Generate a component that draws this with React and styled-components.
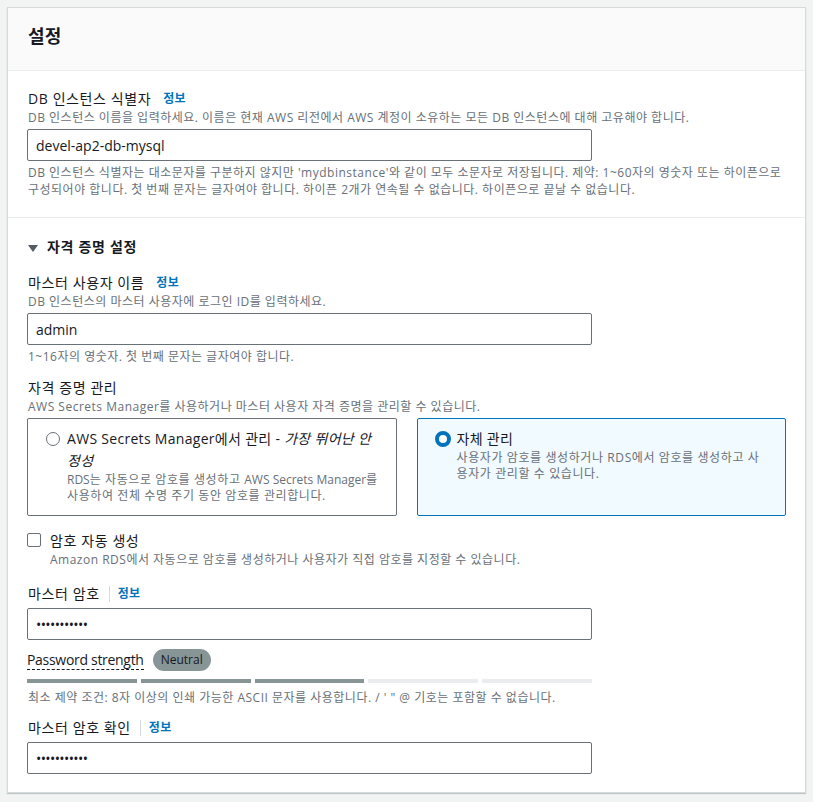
import React from "react";
import styled, { createGlobalStyle } from "styled-components";

const GlobalStyle = createGlobalStyle`
  body {
    margin: 0;
    background-color: #f2f3f3;
    font-family: "Open Sans", "Noto Sans CJK KR", sans-serif;
    color: #16191f;
  }
`;

const Page = styled.div`
  padding: 7px 7px 8px;
`;

const Card = styled.div`
  background-color: white;
  border: 1px solid #d5dbdb;
  box-shadow: 0 1px 1px rgba(0, 28, 36, 0.2);
`;

const Header = styled.div`
  height: 63px;
  box-sizing: border-box;
  padding: 15px 19px 0 20px;
  background-color: #fafafa;
  border-bottom: 1px solid #eaeded;
`;

const Title = styled.h2`
  margin: 0;
  font-size: 18px;
  line-height: 26px;
  font-weight: 700;
  letter-spacing: 0.3px;
`;

const Section = styled.div`
  padding: ${(props) => props.pad};
  border-top: ${(props) => (props.divided ? "1px solid #eaeded" : "none")};
`;

const ExpandHeader = styled.div`
  display: flex;
  align-items: center;
  gap: 9px;
  font-size: 14px;
  line-height: 20px;
  font-weight: 700;
  letter-spacing: 0.7px;
  padding-left: 1px;
`;

const Caret = styled.span`
  width: 0;
  height: 0;
  margin-top: 2px;
  border-left: 5px solid transparent;
  border-right: 5px solid transparent;
  border-top: 7px solid #545b64;
`;

const LabelRow = styled.div`
  display: flex;
  align-items: center;
  margin-top: ${(props) => props.top || 0}px;
  font-size: 14px;
  line-height: 20px;
`;

const Label = styled.span`
  padding-left: 1px;
  letter-spacing: 0.6px;
`;

const InfoLink = styled.a`
  color: #0073bb;
  font-size: 12px;
  font-weight: 700;
  letter-spacing: 0.3px;
  text-decoration: none;
  margin-left: ${(props) => (props.split ? 0 : 12)}px;
`;

const Split = styled.span`
  width: 1px;
  height: 16px;
  background-color: #d5dbdb;
  margin: 0 8px 0 9px;
`;

const Description = styled.div`
  font-size: 12px;
  line-height: 17px;
  letter-spacing: 0.5px;
  color: #687078;
  padding-left: ${(props) => props.indent || 1}px;
`;

const Input = styled.input`
  display: block;
  box-sizing: border-box;
  width: 565px;
  height: 32px;
  margin-top: ${(props) => props.top || 3}px;
  padding: 0 8px;
  border: 1px solid #687078;
  border-radius: 2px;
  font-family: "Open Sans", "Noto Sans CJK KR", sans-serif;
  font-size: 14px;
  color: #16191f;
  background: white;
  outline: none;
  letter-spacing: ${(props) => (props.type === "password" ? "-0.6px" : "normal")};
`;

const Constraint = styled.div`
  margin-top: 3px;
  font-size: 12px;
  line-height: 17px;
  letter-spacing: 0.5px;
  color: #687078;
  padding-left: 1px;
`;

const Tiles = styled.div`
  display: grid;
  grid-template-columns: 1fr 1fr;
  gap: 20px;
  margin-top: 3px;
`;

const Tile = styled.div`
  display: flex;
  gap: 7px;
  padding: 9px 16px 11px 18px;
  border: 1px solid ${(props) => (props.selected ? "#0073bb" : "#687078")};
  border-radius: 2px;
  background-color: ${(props) => (props.selected ? "#f1faff" : "white")};
`;

const Radio = styled.span`
  flex: none;
  box-sizing: border-box;
  width: ${(props) => (props.checked ? 16 : 14)}px;
  height: ${(props) => (props.checked ? 16 : 14)}px;
  margin: ${(props) => (props.checked ? "3px -1px 0" : "4px 0 0")};
  border-radius: 50%;
  border: ${(props) =>
    props.checked ? "4.5px solid #0073bb" : "1.5px solid #687078"};
  background: white;
`;

const TileBody = styled.div`
  flex: 1;
`;

const TileTitle = styled.div`
  font-size: 14px;
  line-height: 22px;
  letter-spacing: 0.3px;

  em {
    font-style: italic;
  }
`;

const TileText = styled.div`
  font-size: 12px;
  line-height: 16px;
  letter-spacing: 0.6px;
  color: #687078;
`;

const Latin = styled.span`
  letter-spacing: 0;
`;

const CheckRow = styled.div`
  display: flex;
  align-items: center;
  gap: 9px;
  margin-top: 15px;
  font-size: 14px;
  line-height: 20px;
  letter-spacing: 0.6px;
`;

const Checkbox = styled.span`
  box-sizing: border-box;
  width: 14px;
  height: 14px;
  margin-bottom: 3px;
  border: 1.5px solid #687078;
  border-radius: 2px;
`;

const StrengthRow = styled.div`
  display: flex;
  align-items: center;
  gap: 9px;
  margin-top: 9px;
`;

const StrengthLabel = styled.span`
  font-size: 14px;
  line-height: 18px;
  letter-spacing: -0.3px;
  border-bottom: 1px dashed #16191f;
`;

const Badge = styled.span`
  height: 22px;
  padding: 0 8px;
  border-radius: 11px;
  background-color: #879596;
  font-size: 12px;
  line-height: 22px;
  color: #16191f;
`;

const Meter = styled.div`
  display: flex;
  gap: 4px;
  width: 565px;
  margin-top: 8px;
`;

const Segment = styled.span`
  flex: 1;
  height: 4px;
  background-color: ${(props) => (props.filled ? "#879596" : "#eaeded")};
`;

const StrengthHint = styled(Constraint)`
  margin-top: 6px;
`;

const Field = ({ label, top, split }) => (
  <LabelRow top={top}>
    <Label>{label}</Label>
    {split && <Split />}
    <InfoLink href="#" split={split}>
      정보
    </InfoLink>
  </LabelRow>
);

const App = () => {
  const strength = 3;

  return (
    <Page>
      <GlobalStyle />
      <Card>
        <Header>
          <Title>설정</Title>
        </Header>

        <Section pad="18px 19px 19px">
          <Field label="DB 인스턴스 식별자" />
          <Description>
            DB 인스턴스 이름을 입력하세요. 이름은 현재 AWS 리전에서 AWS 계정이
            소유하는 모든 DB 인스턴스에 대해 고유해야 합니다.
          </Description>
          <Input defaultValue="devel-ap2-db-mysql" />
          <Constraint>
            DB 인스턴스 식별자는 대소문자를 구분하지 않지만 'mydbinstance'와
            같이 모두 소문자로 저장됩니다. 제약: 1~60자의 영숫자 또는 하이픈으로
            구성되어야 합니다. 첫 번째 문자는 글자여야 합니다. 하이픈 2개가
            연속될 수 없습니다. 하이픈으로 끝날 수 없습니다.
          </Constraint>
        </Section>

        <Section divided pad="19px 19px 18px">
          <ExpandHeader>
            <Caret />
            자격 증명 설정
          </ExpandHeader>

          <Field label="마스터 사용자 이름" top={16} />
          <Description>DB 인스턴스의 마스터 사용자에 로그인 ID를 입력하세요.</Description>
          <Input defaultValue="admin" />
          <Constraint>1~16자의 영숫자. 첫 번째 문자는 글자여야 합니다.</Constraint>

          <LabelRow top={13}>
            <Label>자격 증명 관리</Label>
          </LabelRow>
          <Description>
            AWS Secrets Manager를 사용하거나 마스터 사용자 자격 증명을 관리할 수
            있습니다.
          </Description>
          <Tiles>
            <Tile>
              <Radio />
              <TileBody>
                <TileTitle>
                  AWS Secrets Manager에서 관리 - <em>가장 뛰어난 안정성</em>
                </TileTitle>
                <TileText>
                  <Latin>RDS</Latin>는 자동으로 암호를 생성하고{" "}
                  <Latin>AWS Secrets Manager</Latin>를 사용하여 전체 수명 주기
                  동안 암호를 관리합니다.
                </TileText>
              </TileBody>
            </Tile>
            <Tile selected>
              <Radio checked />
              <TileBody>
                <TileTitle>자체 관리</TileTitle>
                <TileText>
                  사용자가 암호를 생성하거나 RDS에서 암호를 생성하고 사용자가
                  관리할 수 있습니다.
                </TileText>
              </TileBody>
            </Tile>
          </Tiles>

          <CheckRow>
            <Checkbox />
            암호 자동 생성
          </CheckRow>
          <Description indent={23}>
            Amazon RDS에서 자동으로 암호를 생성하거나 사용자가 직접 암호를 지정할
            수 있습니다.
          </Description>

          <Field label="마스터 암호" top={16} split />
          <Input type="password" defaultValue="xxxxxxxxxxx" top={4} />
          <StrengthRow>
            <StrengthLabel>Password strength</StrengthLabel>
            <Badge>Neutral</Badge>
          </StrengthRow>
          <Meter>
            {[1, 2, 3, 4, 5].map((n) => (
              <Segment key={n} filled={n <= strength} />
            ))}
          </Meter>
          <StrengthHint>
            최소 제약 조건: 8자 이상의 인쇄 가능한 ASCII 문자를 사용합니다. / ' "
            @ 기호는 포함할 수 없습니다.
          </StrengthHint>

          <Field label="마스터 암호 확인" top={12} split />
          <Input type="password" defaultValue="xxxxxxxxxxx" top={4} />
        </Section>
      </Card>
    </Page>
  );
};

export default App;
